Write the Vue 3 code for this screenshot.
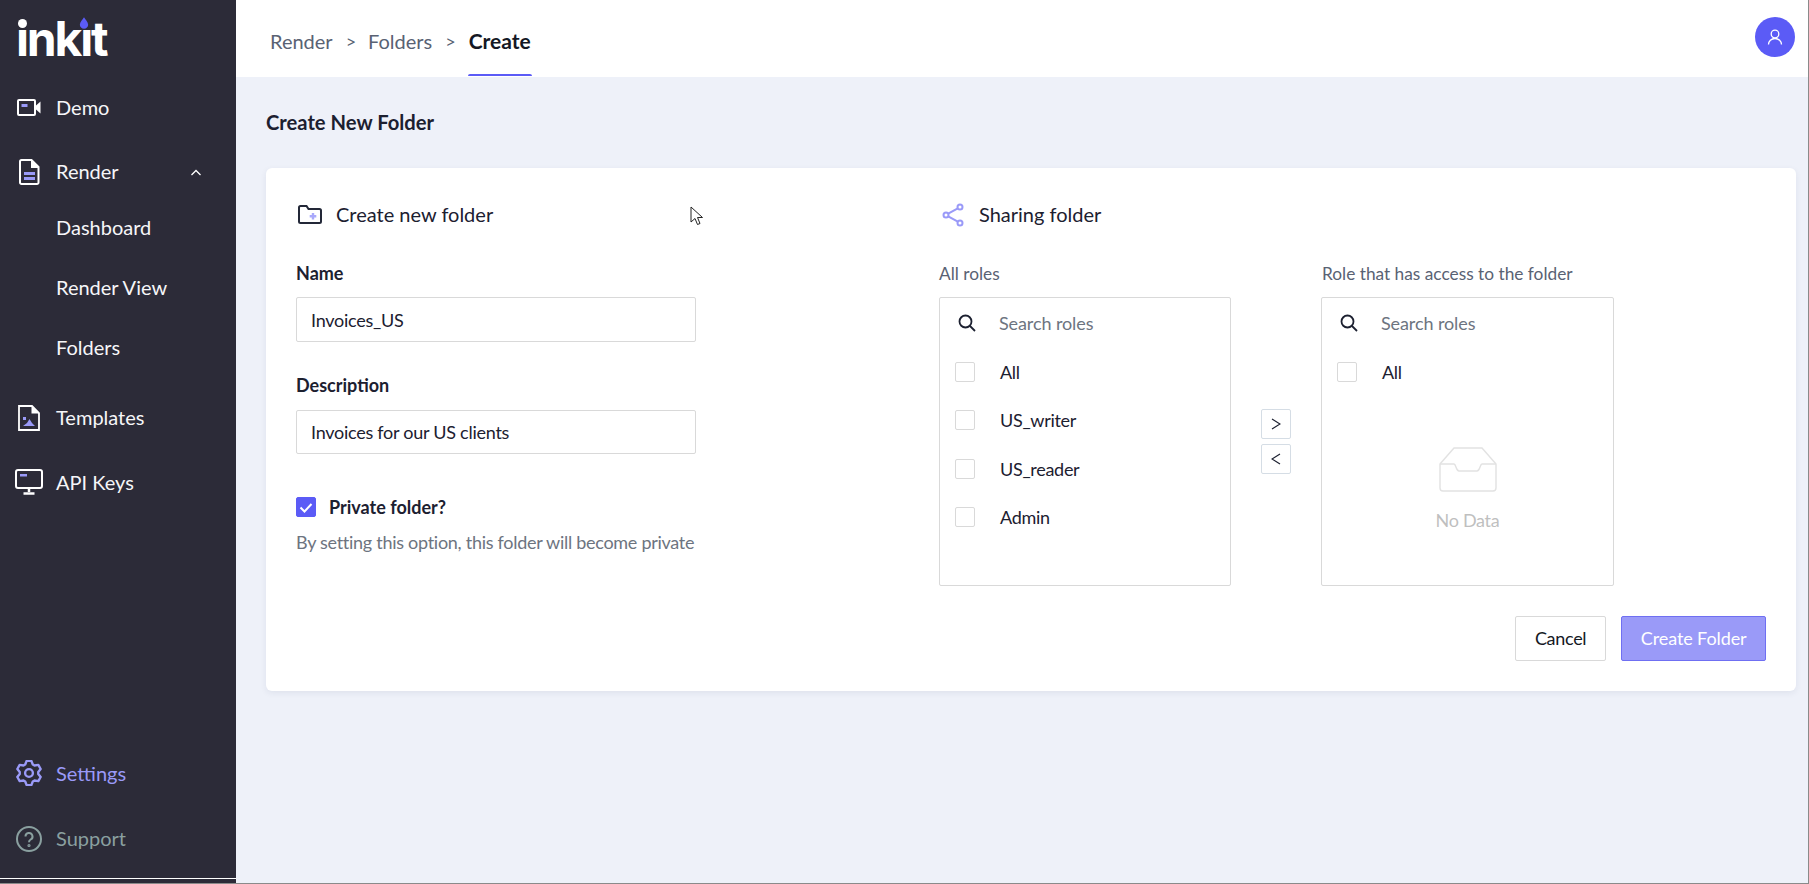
<script setup>
const allRoles = ['All', 'US_writer', 'US_reader', 'Admin']
const crumbs = ['Render', 'Folders']

// six flat teeth, same outline as the settings icon in the app
function gearPath() {
  const pts = []
  for (let k = 0; k < 6; k++) {
    const a = k * 60 - 90
    for (const [r, d] of [[8.6, -24], [11.4, -11], [11.4, 11], [8.6, 24]]) {
      const t = (a + d) * Math.PI / 180
      pts.push((12 + r * Math.cos(t)).toFixed(2) + ' ' + (12 + r * Math.sin(t)).toFixed(2))
    }
  }
  return 'M' + pts.join('L') + 'Z'
}
const gear = gearPath()
</script>

<template>
  <div class="shell">
    <aside class="sidebar">
      <div class="logo">
        <span class="logo-text">ınkıt</span>
        <i class="logo-dot"></i>
        <svg class="logo-drop" viewBox="0 0 12 14"><path d="M6 0C7.500 3 11 5.500 11 9a5 5 0 0 1-10 0C1 5.500 4.500 3 6 0z" fill="#5b5bf6"/></svg>
      </div>

      <a class="nav-item demo">
        <span class="nav-icon">
          <svg width="24" height="17" viewBox="0 0 24 17" fill="none">
            <rect x="1" y="1" width="17" height="15" rx="1" stroke="#fff" stroke-width="2"/>
            <rect x="4.500" y="5" width="6" height="3" fill="#9a9af8"/>
            <path d="M19 6.500 23.500 2.500v12L19 10.500z" fill="#fff"/>
          </svg>
        </span>
        Demo
      </a>
      <a class="nav-item render">
        <span class="nav-icon">
          <svg width="21" height="26" viewBox="0 0 21 26" fill="none">
            <path d="M2.500 1h10l7 7v15.500a1.500 1.500 0 0 1-1.500 1.500H2.500A1.500 1.500 0 0 1 1 23.500v-21A1.500 1.500 0 0 1 2.500 1z" stroke="#fff" stroke-width="2"/>
            <path d="M12 1v8h8z" fill="#fff"/>
            <rect x="5" y="13" width="11" height="3" fill="#9a9af8"/>
            <rect x="5" y="18" width="11" height="3" fill="#9a9af8"/>
          </svg>
        </span>
        Render
        <svg class="chevron" width="12" height="7" viewBox="0 0 12 7" fill="none"><path d="M1.500 6 6 1.500 10.500 6" stroke="#fff" stroke-width="1.300"/></svg>
      </a>
      <a class="nav-sub">Dashboard</a>
      <a class="nav-sub">Render View</a>
      <a class="nav-sub">Folders</a>
      <a class="nav-item templates">
        <span class="nav-icon">
          <svg width="22" height="26" viewBox="0 0 22 26" fill="none">
            <path d="M1 1h13l7 7v17H1z" stroke="#fff" stroke-width="1.800"/>
            <path d="M13.500 1v7.500H21z" fill="#fff"/>
            <rect x="5" y="12" width="3" height="3" fill="#9a9af8"/>
            <path d="M5 21l4-3 2.500-4 2.500 4 3 3z" fill="#9a9af8"/>
          </svg>
        </span>
        Templates
      </a>
      <a class="nav-item api">
        <span class="nav-icon">
          <svg width="28" height="26" viewBox="0 0 28 26" fill="none">
            <rect x="1" y="1" width="26" height="18" rx="2" stroke="#fff" stroke-width="2"/>
            <rect x="5" y="5" width="7" height="2.500" fill="#9a9af8"/>
            <path d="M14 19v4M8.500 24.500h11" stroke="#fff" stroke-width="2.500"/>
          </svg>
        </span>
        API Keys
      </a>

      <a class="nav-item settings">
        <span class="nav-icon">
          <svg width="26" height="26" viewBox="0 0 24 24" fill="none" stroke="#9a9af8" stroke-width="2.200">
            <circle cx="12" cy="12" r="3.600"/>
            <path :d="gear" stroke-linejoin="round"/>
          </svg>
        </span>
        Settings
      </a>
      <a class="nav-item support">
        <span class="nav-icon">
          <svg width="26" height="26" viewBox="0 0 26 26" fill="none" stroke="#8aa0a0" stroke-width="2">
            <circle cx="13" cy="13" r="12"/>
            <path d="M9.500 10.500a3.500 3.500 0 1 1 5.200 3c-1.200.7-1.700 1.300-1.700 2.700"/>
            <circle cx="13" cy="19.500" r=".6"/>
          </svg>
        </span>
        Support
      </a>
      <div class="side-rule"></div>
    </aside>

    <div class="main">
      <header class="topbar">
        <nav class="crumbs">
          <template v-for="c in crumbs" :key="c">
            <span class="crumb">{{ c }}</span>
            <span class="sep">&gt;</span>
          </template>
          <span class="crumb current">Create</span>
        </nav>
        <div class="avatar">
          <svg width="16" height="17" viewBox="0 0 16 17" fill="none" stroke="#fff" stroke-width="1.300">
            <circle cx="8" cy="5" r="3.800"/>
            <path d="M1.500 15.500c0-3.500 2.800-6 6.500-6s6.500 2.500 6.500 6"/>
          </svg>
        </div>
      </header>

      <div class="content">
        <h1 class="page-title">Create New Folder</h1>
        <section class="card">
          <div class="card-grid">
            <div class="form-col">
              <div class="section-head">
                <svg class="folder-icon" width="24" height="19" viewBox="0 0 24 19" fill="none">
                  <path d="M1 2.500A1.500 1.500 0 0 1 2.500 1h6l2 3h11A1.500 1.500 0 0 1 23 5.500v11a1.500 1.500 0 0 1-1.500 1.500h-19A1.500 1.500 0 0 1 1 16.500z" stroke="#232838" stroke-width="2"/>
                  <path d="M15 8v6.500M11.700 11.200h6.600" stroke="#a9a9fb" stroke-width="2.400"/>
                </svg>
                Create new folder
              </div>
              <label class="field-label first">Name</label>
              <input class="text-input" value="Invoices_US" />
              <label class="field-label second">Description</label>
              <input class="text-input short" value="Invoices for our US clients" />
              <div class="private-row">
                <span class="check on">
                  <svg width="14" height="11" viewBox="0 0 14 11" fill="none"><path d="M1.500 5.500 5.500 9.500 12.500 2" stroke="#fff" stroke-width="2"/></svg>
                </span>
                Private folder?
              </div>
              <p class="help">By setting this option, this folder will become private</p>
            </div>

            <div class="share-col">
              <div class="section-head">
                <svg class="share-icon" width="22" height="24" viewBox="0 0 22 24" fill="none" stroke="#9a9af8" stroke-width="2">
                  <circle cx="4" cy="12" r="2.500"/>
                  <circle cx="18" cy="4" r="2.500"/>
                  <circle cx="18" cy="20" r="2.500"/>
                  <path d="M6.200 10.700 15.800 5.300M6.200 13.300l9.600 5.400"/>
                </svg>
                Sharing folder
              </div>
              <div class="transfer">
                <div class="transfer-col">
                  <div class="transfer-label">All roles</div>
                  <div class="list-box">
                    <div class="search-row">
                      <svg class="search-icon" width="18" height="18" viewBox="0 0 18 18" fill="none" stroke="#1c2030" stroke-width="1.800">
                        <circle cx="7.500" cy="7.500" r="6"/><path d="M12 12l5 5"/>
                      </svg>
                      <span class="search-ph">Search roles</span>
                    </div>
                    <div v-for="r in allRoles" :key="r" class="role-row">
                      <span class="check"></span>{{ r }}
                    </div>
                  </div>
                </div>

                <div class="transfer-ops">
                  <button class="op-btn">
                    <svg width="10" height="12" viewBox="0 0 10 12" fill="none" stroke="#1c2030" stroke-width="1.200"><path d="M1 1l8 5-8 5"/></svg>
                  </button>
                  <button class="op-btn">
                    <svg width="10" height="12" viewBox="0 0 10 12" fill="none" stroke="#1c2030" stroke-width="1.200"><path d="M9 1 1 6l8 5"/></svg>
                  </button>
                </div>

                <div class="transfer-col wide">
                  <div class="transfer-label">Role that has access to the folder</div>
                  <div class="list-box">
                    <div class="search-row">
                      <svg class="search-icon" width="18" height="18" viewBox="0 0 18 18" fill="none" stroke="#1c2030" stroke-width="1.800">
                        <circle cx="7.500" cy="7.500" r="6"/><path d="M12 12l5 5"/>
                      </svg>
                      <span class="search-ph">Search roles</span>
                    </div>
                    <div class="role-row"><span class="check"></span>All</div>
                    <div class="empty">
                      <svg width="58" height="45" viewBox="0 0 58 45" fill="none" stroke="#e2e2e2" stroke-width="1.400">
                        <path d="M1 17 15 1h28l14 16v24a3 3 0 0 1-3 3H4a3 3 0 0 1-3-3z"/>
                        <path d="M1 17h14c2 0 2 7 5 7h18c3 0 3-7 5-7h14"/>
                      </svg>
                      <span>No Data</span>
                    </div>
                  </div>
                </div>
              </div>
            </div>
          </div>
          <div class="actions">
            <button class="btn">Cancel</button>
            <button class="btn primary">Create Folder</button>
          </div>
        </section>
      </div>
    </div>

    <svg class="cursor" width="14" height="20" viewBox="0 0 14 20" fill="#fff" stroke="#222" stroke-width="1">
      <path d="M1 1v15l4-3.500 2.500 6 2.500-1-2.500-6H12.500z"/>
    </svg>
  </div>
</template>

<style scoped>
.shell {
  position: relative;
  display: flex;
  height: 883px;
  border-bottom: 1px solid #8a8a8a;
  border-right: 1px solid #8a8a8a;
  font-family: Lato, "Liberation Sans", sans-serif;
  color: #1c2030;
  overflow: hidden;
}

/* sidebar */
.sidebar {
  width: 236px;
  flex-shrink: 0;
  background: #2c2b38;
  display: flex;
  flex-direction: column;
  color: #f6f6f8;
  font-size: 20px;
}
.logo {
  position: relative;
  height: 78px;
  flex-shrink: 0;
}
.logo-text {
  position: absolute;
  left: 16px;
  top: 10px;
  font-family: Inter, sans-serif;
  font-weight: 700;
  font-size: 48px;
  line-height: 58px;
  letter-spacing: -2.2px;
  color: #fff;
}
.logo-dot {
  position: absolute;
  left: 18px;
  top: 19px;
  width: 9px;
  height: 9px;
  border-radius: 50%;
  background: #fff;
}
.logo-drop {
  position: absolute;
  left: 79px;
  top: 17px;
  width: 10px;
  height: 12px;
}
.nav-item,
.nav-sub {
  display: flex;
  align-items: center;
  height: 60px;
  box-sizing: border-box;
  padding-left: 15px;
  padding-bottom: 3px;
  flex-shrink: 0;
}
.nav-sub { padding-left: 56px; }
.nav-icon {
  width: 28px;
  margin-right: 13px;
  margin-top: 2px;
  display: flex;
  justify-content: center;
}
.render { height: 52px; margin-top: 8px; position: relative; }
.chevron { position: absolute; left: 190px; top: 23px; }
.templates { margin-top: 10px; }
.api { margin-top: 4px; padding-bottom: 1px; }
.api .nav-icon, .settings .nav-icon { margin-top: 0; }
.settings { margin-top: auto; padding-bottom: 1px; color: #9a9af8; }
.support { margin-top: 6px; color: #8aa0a0; }
.side-rule {
  height: 1px;
  background: #fff;
  margin: 9px 0 4px;
}

/* top bar */
.main {
  flex: 1;
  min-width: 0;
  background: #eef1f9;
  display: flex;
  flex-direction: column;
}
.topbar {
  height: 77px;
  flex-shrink: 0;
  background: #fff;
  display: flex;
  justify-content: space-between;
  align-items: center;
  padding: 0 13px 0 34px;
}
.crumbs {
  display: flex;
  align-items: center;
  height: 100%;
  box-sizing: border-box;
  padding-top: 4px;
  font-size: 20px;
  color: #596273;
}
.sep {
  font-size: 18px;
  margin: 0 12px 0 13px;
}
.crumb.current {
  height: 100%;
  box-sizing: border-box;
  display: flex;
  align-items: center;
  padding: 0 1px;
  color: #141824;
  font-weight: 700;
  position: relative;
  font-size: 21px;
}
.crumb.current::after {
  content: '';
  position: absolute;
  left: 0;
  right: 0;
  bottom: 1px;
  height: 2px;
  background: #5b5bf6;
  border-radius: 2px 2px 0 0;
}
.avatar {
  width: 40px;
  height: 40px;
  border-radius: 50%;
  background: #5b5bf6;
  display: flex;
  align-items: center;
  justify-content: center;
  margin-bottom: 3px;
}

/* content */
.content { padding: 0 12px 0 30px; }
.page-title {
  margin: 0;
  height: 89px;
  padding-bottom: 2px;
  display: flex;
  align-items: center;
  font-size: 20.2px;
  font-weight: 700;
  color: #1c2030;
}
.card {
  height: 523px;
  box-sizing: border-box;
  padding: 32px 30px 30px;
  background: #fff;
  border-radius: 6px;
  box-shadow: 0 2px 6px rgba(40, 50, 90, .08);
}
.card-grid {
  display: flex;
  gap: 243px;
}
.form-col { width: 400px; flex-shrink: 0; }
.section-head {
  height: 30px;
  box-sizing: border-box;
  padding-bottom: 3px;
  display: flex;
  align-items: center;
  font-size: 20px;
}
.folder-icon { margin: 2px 14px 0 2px; }
.share-icon { margin: 2px 15px 0 3px; }

.field-label {
  display: block;
  height: 24px;
  line-height: 24px;
  font-size: 18px;
  font-weight: 700;
}
.field-label.first { margin: 31px 0 12px; }
.field-label.second { margin: 31px 0 13px; }
.text-input {
  display: block;
  width: 100%;
  height: 45px;
  box-sizing: border-box;
  padding: 0 14px;
  border: 1px solid #d9d9d9;
  border-radius: 2px;
  font-family: inherit;
  font-size: 18px;
  letter-spacing: -.26px;
  color: #1c2030;
  outline: none;
}
.text-input.short { height: 44px; }
.private-row {
  display: flex;
  align-items: center;
  gap: 13px;
  margin-top: 43px;
  height: 20px;
  font-size: 18px;
  font-weight: 700;
}
.check {
  width: 20px;
  height: 20px;
  flex-shrink: 0;
  box-sizing: border-box;
  border: 1px solid #d9d9d9;
  border-radius: 2px;
  display: flex;
  align-items: center;
  justify-content: center;
  background: #fff;
}
.check.on {
  background: #5b5bf6;
  border-color: #5b5bf6;
}
.help {
  margin: 13px 0 0;
  height: 24px;
  line-height: 24px;
  font-size: 18px;
  letter-spacing: -.28px;
  white-space: nowrap;
  color: #6d7480;
}

/* transfer */
.share-col { flex: 1; min-width: 0; }
.transfer {
  display: flex;
  margin-top: 31px;
}
.transfer-col { width: 292px; flex-shrink: 0; }
.transfer-col.wide { width: 293px; }
.transfer-label {
  line-height: 24px;
  margin-bottom: 12px;
  padding-top: 1px;
  height: 23px;
  font-size: 17.3px;
  color: #596273;
  white-space: nowrap;
}
.transfer-col.wide .transfer-label { padding-left: 1px; }
.list-box {
  height: 289px;
  box-sizing: border-box;
  border: 1px solid #d9d9d9;
  border-radius: 2px;
}
.search-row {
  height: 50px;
  display: flex;
  align-items: center;
  padding-left: 18px;
  font-size: 18px;
  letter-spacing: -.1px;
}
.search-icon { margin-right: 23px; }
.search-ph { color: #6d7480; }
.role-row {
  height: 48.3px;
  display: flex;
  align-items: center;
  gap: 25px;
  padding-left: 15px;
  font-size: 18px;
  letter-spacing: -.3px;
}
.transfer-ops {
  width: 90px;
  flex-shrink: 0;
  margin-top: 36px;
  display: flex;
  flex-direction: column;
  align-items: center;
  justify-content: center;
  gap: 5px;
}
.op-btn {
  width: 30px;
  height: 30px;
  padding: 0;
  background: #fff;
  border: 1px solid #d5dde5;
  border-radius: 2px;
  display: flex;
  align-items: center;
  justify-content: center;
}
.empty {
  margin-top: 51px;
  display: flex;
  flex-direction: column;
  align-items: center;
  gap: 16px;
  font-size: 18px;
  letter-spacing: -.3px;
  line-height: 24px;
  color: #bfbfbf;
}
.actions {
  display: flex;
  justify-content: flex-end;
  gap: 15px;
  margin-top: 30px;
}
.btn {
  height: 45px;
  padding: 0 19px 2px;
  background: #fff;
  border: 1px solid #d9d9d9;
  border-radius: 2px;
  font-family: inherit;
  font-size: 18px;
  letter-spacing: -.3px;
  color: #141824;
}
.btn.primary {
  padding: 0 18.5px 2px;
  letter-spacing: -.1px;
  background: #9a9af8;
  border-color: #6f6ff2;
  color: #fff;
}
.cursor {
  position: absolute;
  left: 690px;
  top: 206px;
}
</style>

<style>
html, body { margin: 0; background: #fff; overflow: hidden; }
</style>
